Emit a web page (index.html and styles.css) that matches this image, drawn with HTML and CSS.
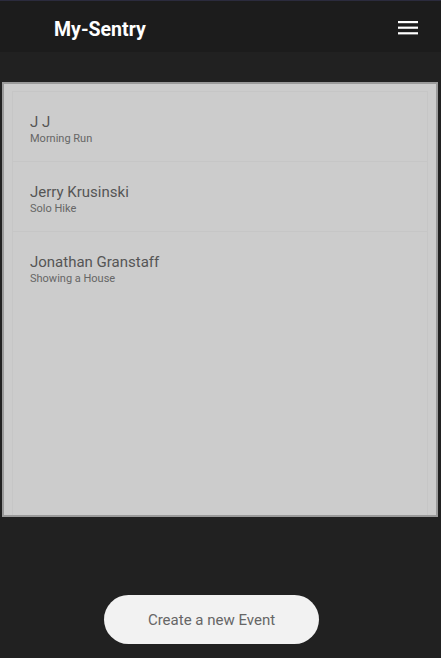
FILE: index.html
```html
<!DOCTYPE html>
<html>
<head>
<meta charset="utf-8">
<link rel="stylesheet" href="styles.css">
</head>
<body>
<header class="topbar">
  <h1 class="brand">My-Sentry</h1>
  <button class="menu-btn" aria-label="menu">
    <svg width="20" height="14" viewBox="0 0 20 14"><rect x="0" y="0" width="20" height="2.2" fill="#fff"/><rect x="0" y="5.6" width="20" height="2.2" fill="#fff"/><rect x="0" y="11.2" width="20" height="2.2" fill="#fff"/></svg>
  </button>
</header>
<main class="content">
  <section class="card">
    <ul class="event-list">
      <li class="event"><div class="name">J J</div><div class="desc">Morning Run</div></li>
      <li class="event"><div class="name">Jerry Krusinski</div><div class="desc">Solo Hike</div></li>
      <li class="event"><div class="name">Jonathan Granstaff</div><div class="desc">Showing a House</div></li>
    </ul>
  </section>
  <div class="actions">
    <button class="create-btn">Create a new Event</button>
  </div>
</main>
</body>
</html>
```
FILE: styles.css
```css
html, body {
  margin: 0;
  padding: 0;
  background: #212121;
  font-family: Roboto, "Noto Sans", sans-serif;
}
.topbar {
  height: 51px;
  border-top: 1px solid #2b2b3d;
  background: #1c1c1c;
  display: flex;
  align-items: center;
  justify-content: space-between;
  padding: 0 23px 0 54px;
}
.brand {
  margin: 0;
  color: #ffffff;
  font-size: 19.5px;
  font-weight: 700;
  padding-top: 6px;
}
.menu-btn {
  background: none;
  border: none;
  padding: 0;
  display: flex;
  margin-top: 2px;
}
.content {
  padding-top: 30px;
  display: flex;
  flex-direction: column;
}
.card {
  box-sizing: border-box;
  margin: 0 3px 0 2px;
  height: 435px;
  border: 2px solid #9a9a9a;
  background: #cccccc;
  padding: 7px 8px 0 8px;
  display: flex;
}
.event-list {
  list-style: none;
  margin: 0;
  padding: 0;
  flex: 1;
  border: 1px solid #c6c6c6;
  border-bottom: none;
}
.event {
  height: 70px;
  box-sizing: border-box;
  border-bottom: 1px solid #c6c6c6;
  padding: 20px 0 0 17px;
}
.event:last-child {
  border-bottom: none;
}
.name {
  font-size: 15px;
  color: #555555;
  line-height: 20px;
}
.desc {
  font-size: 11px;
  color: #666666;
  line-height: 14px;
}
.actions {
  display: flex;
  justify-content: center;
  padding-top: 78px;
  padding-right: 18px;
}
.create-btn {
  width: 215px;
  height: 49px;
  border-radius: 25px;
  border: none;
  background: #f2f2f2;
  color: #666666;
  font-family: Roboto, "Noto Sans", sans-serif;
  font-size: 15px;
  padding: 0;
}
```
